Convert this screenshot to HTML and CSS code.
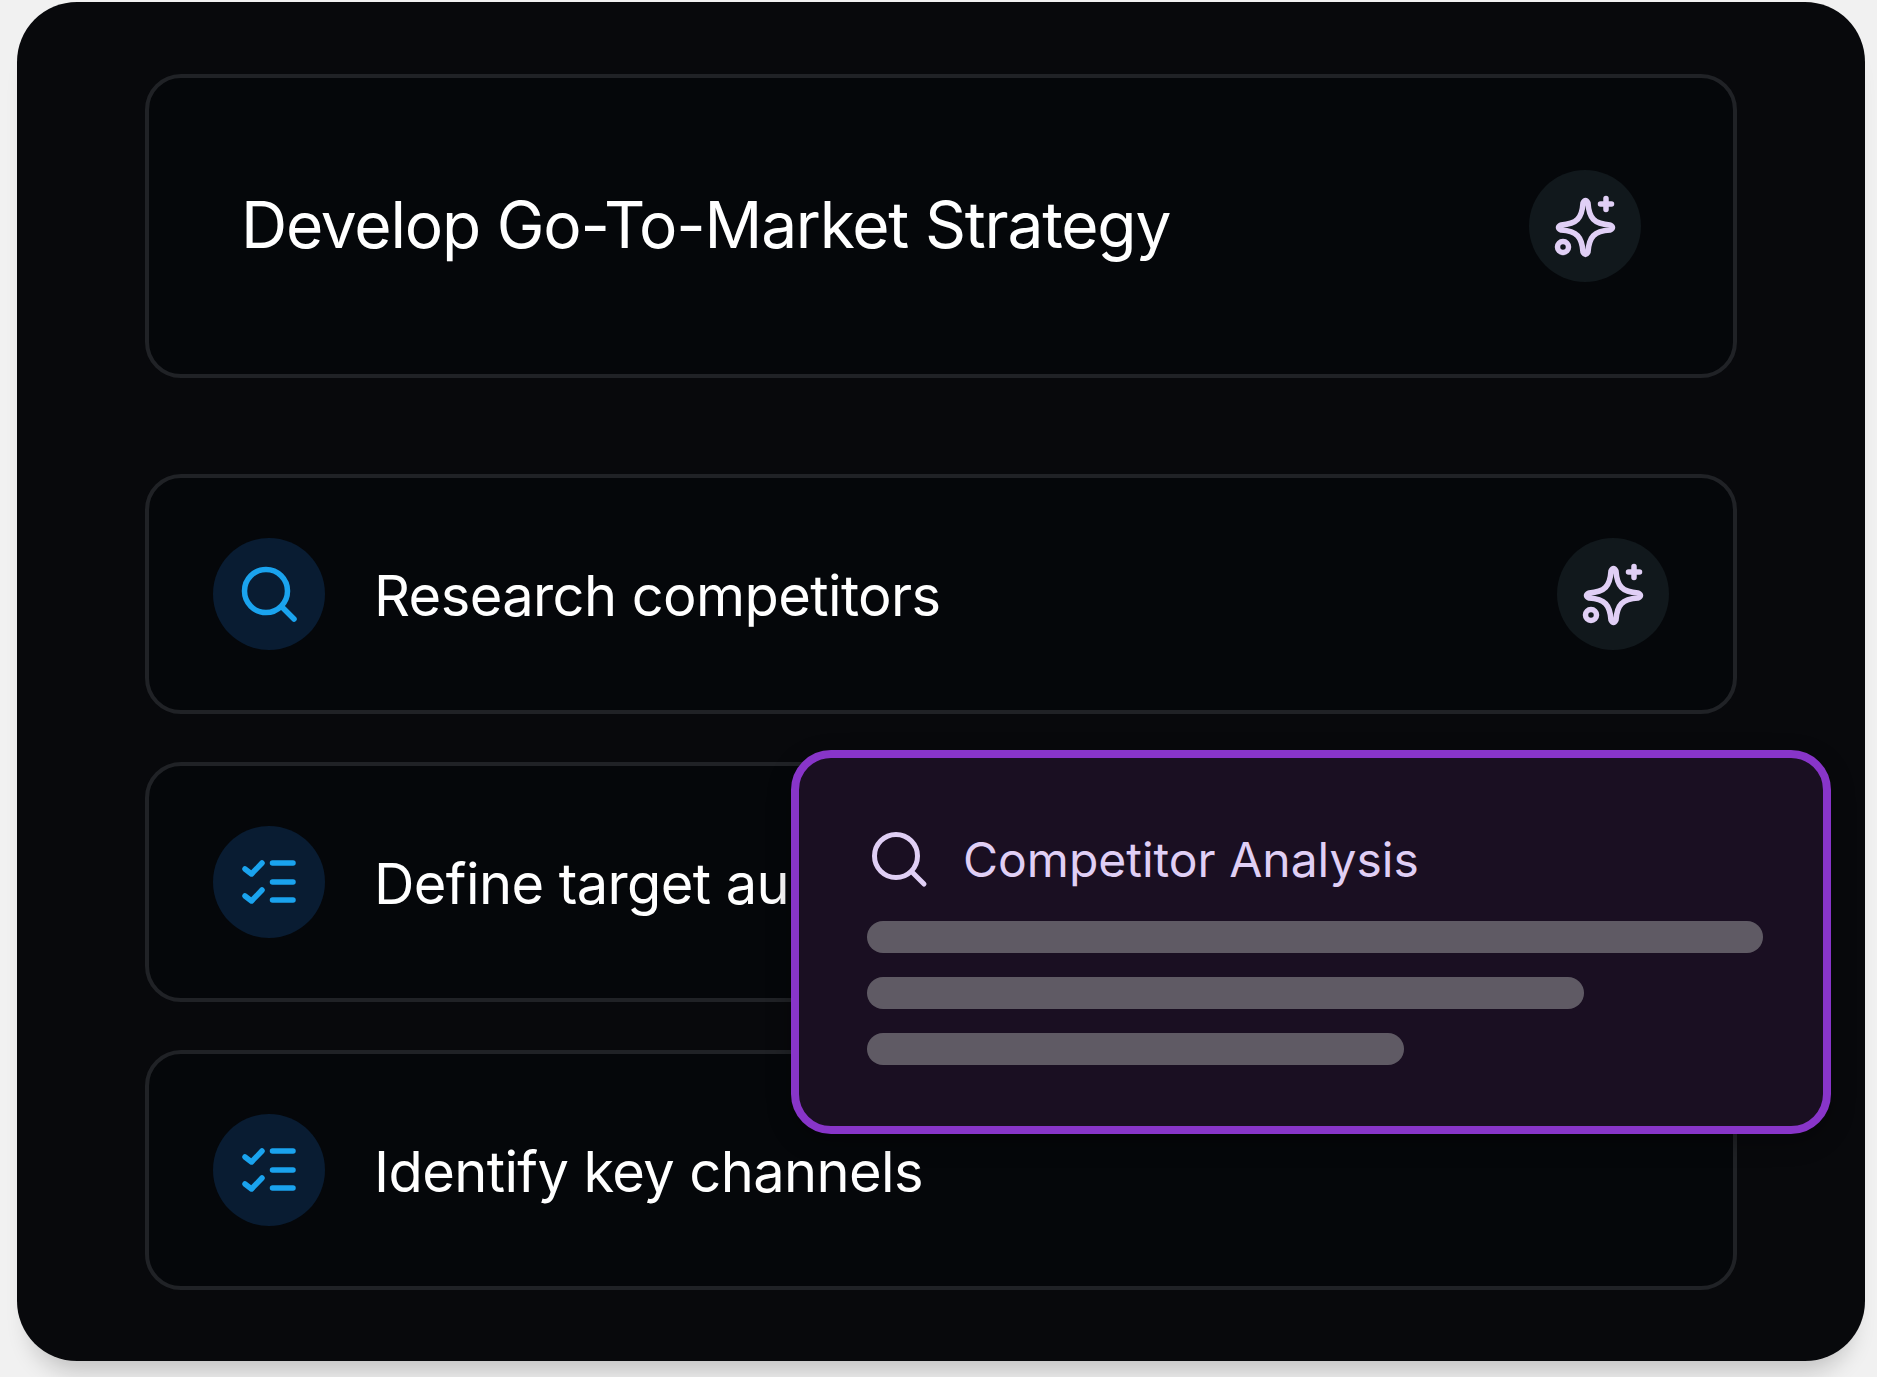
FILE: index.html
```html
<!DOCTYPE html>
<html lang="en">
<head>
  <meta charset="UTF-8" />
  <title>Develop Go-To-Market Strategy</title>
  <link rel="stylesheet" href="styles.css">
</head>
<body>

  <svg class="sprites" width="0" height="0">
    <symbol id="sparkle" viewBox="0 0 112 112">
      <path d="M54 33 Q56.500 28 59 33 C60 48 65 54 81 55 Q86 57.500 81 60 C65 61 60 67 59 82 Q56.500 87 54 82 C53 67 48 61 32 60 Q27 57.500 32 55 C48 54 53 48 54 33 Z" />
      <path d="M77 28.500 V39.500 M71.500 34 H82.500" />
      <circle cx="34" cy="77" r="5.500" />
    </symbol>
    <symbol id="search" viewBox="0 0 112 112">
      <circle cx="53" cy="53" r="21.500" />
      <path d="M70 70 L81 81" />
    </symbol>
    <symbol id="checklist" viewBox="0 0 112 112">
      <path d="M32 43 L38.500 48 L49 37" />
      <path d="M32 70 L38.500 75 L49 64" />
      <path d="M59.500 37 H80" />
      <path d="M59.500 56 H80" />
      <path d="M59.500 74 H80" />
    </symbol>
  </svg>

  <div class="panel">

    <div class="card card-title">
      <h1>Develop Go-To-Market Strategy</h1>
      <span class="badge badge-ai"><svg class="icon"><use href="#sparkle"></use></svg></span>
    </div>

    <div class="tasks">
      <div class="card card-task">
        <span class="badge badge-task"><svg class="icon"><use href="#search"></use></svg></span>
        <span class="task-name">Research competitors</span>
        <span class="badge badge-ai"><svg class="icon"><use href="#sparkle"></use></svg></span>
      </div>
      <div class="card card-task">
        <span class="badge badge-task"><svg class="icon"><use href="#checklist"></use></svg></span>
        <span class="task-name">Define target audience</span>
      </div>
      <div class="card card-task">
        <span class="badge badge-task"><svg class="icon"><use href="#checklist"></use></svg></span>
        <span class="task-name">Identify key channels</span>
      </div>
    </div>

    <div class="popup">
      <div class="popup-head">
        <svg class="popup-icon"><use href="#search"></use></svg>
        <span>Competitor Analysis</span>
      </div>
      <div class="line line-full"></div>
      <div class="line line-mid"></div>
      <div class="line line-short"></div>
    </div>

  </div>

</body>
</html>
```
FILE: styles.css
```css
body {
  margin: 0;
  height: 1377px;
  overflow: hidden;
  background: #f1f1f1;
  font-family: Inter, "Liberation Sans", sans-serif;
}
.sprites {
  position: absolute;
}
.panel {
  position: relative;
  box-sizing: border-box;
  width: 1848px;
  height: 1359px;
  margin: 2px 0 0 17px;
  padding: 72px 128px 0;
  background: #08090c;
  border-radius: 60px;
  box-shadow: 0 24px 24px -14px rgba(0, 0, 0, 0.2);
}
.card {
  display: flex;
  align-items: center;
  box-sizing: border-box;
  background: #05070a;
  border: 4px solid #202226;
  border-radius: 36px;
}
.card-title {
  justify-content: space-between;
  height: 304px;
  padding: 0 92px 0 92px;
}
h1 {
  margin: -4px 0 0;
  font-size: 64px;
  font-weight: 375;
  letter-spacing: -1.2px;
  color: #fff;
}
.tasks {
  display: flex;
  flex-direction: column;
  gap: 48px;
  margin-top: 96px;
}
.card-task {
  height: 240px;
  padding: 0 64px;
}
.task-name {
  flex: 1;
  margin: 3px 0 0 49px;
  font-size: 56px;
  font-weight: 375;
  letter-spacing: -0.6px;
  color: #fff;
}
.badge {
  display: flex;
  flex: none;
  width: 112px;
  height: 112px;
  border-radius: 50%;
}
.badge-ai {
  background: #11181c;
  color: #e0cff5;
}
.badge-task {
  background: #091c32;
  color: #1aa3ee;
}
.icon {
  width: 112px;
  height: 112px;
  fill: none;
  stroke: currentColor;
  stroke-width: 5.500;
  stroke-linecap: round;
  stroke-linejoin: round;
}
.popup {
  position: absolute;
  left: 774px;
  top: 748px;
  box-sizing: border-box;
  width: 1040px;
  height: 384px;
  padding: 53px 60px 0 68px;
  background: #1a0f22;
  border: 8px solid #8835c9;
  border-radius: 40px;
  box-shadow: 0 8px 24px rgba(0, 0, 0, 0.3);
}
.popup-head {
  display: flex;
  align-items: center;
  gap: 8px;
  height: 96px;
  margin-bottom: 14px;
  font-size: 48px;
  font-weight: 375;
  color: #e0cff5;
}
.popup-icon {
  flex: none;
  width: 112px;
  height: 112px;
  margin: 0 0 0 -24px;
  fill: none;
  stroke: currentColor;
  stroke-width: 5;
  stroke-linecap: round;
}
.line {
  height: 32px;
  margin-bottom: 24px;
  background: #5f5a64;
  border-radius: 16px;
}
.line-full {
  width: 896px;
}
.line-mid {
  width: 717px;
}
.line-short {
  width: 537px;
}
```
